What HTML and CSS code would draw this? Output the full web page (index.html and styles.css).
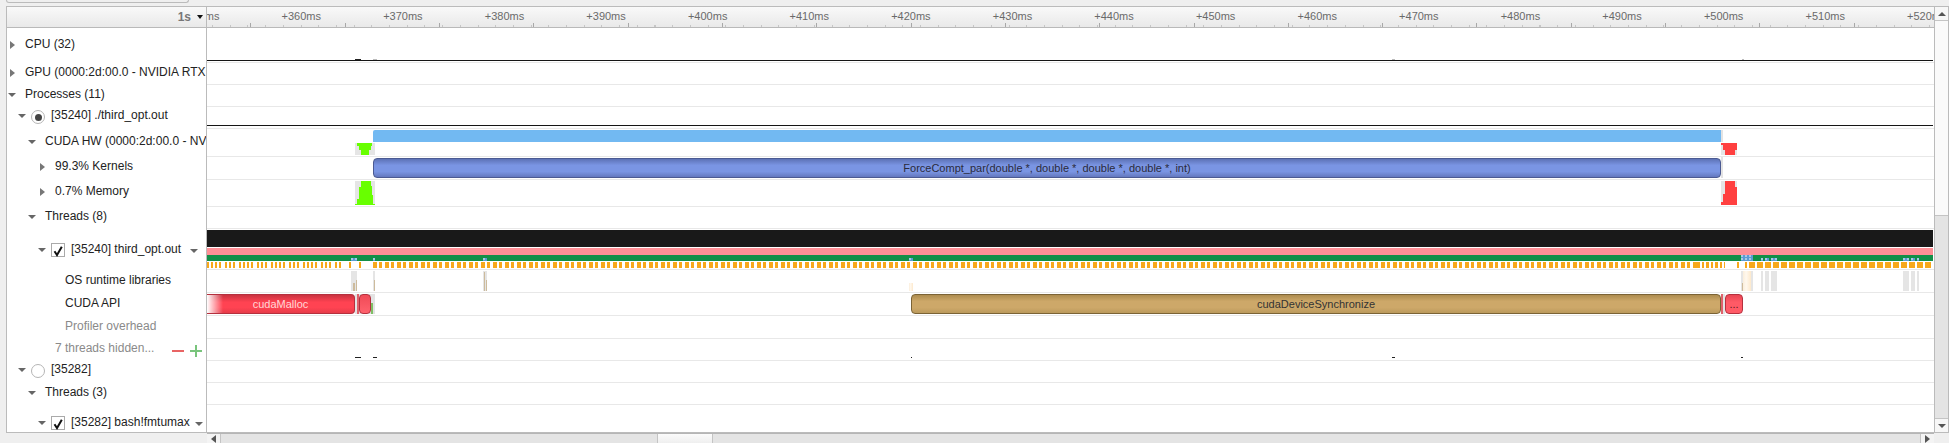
FILE: index.html
```html
<!DOCTYPE html>
<html lang="en">
<head>
<meta charset="utf-8">
<title>Timeline</title>
<link rel="stylesheet" href="styles.css">
</head>
<body>
<div class="topbar"><div class="toolbox"></div></div>
<div class="workspace">
  <div class="column">
    <div class="view">
      <div class="header">
        <div class="zoom"><span class="zoom-value">1s</span><span class="caret"></span></div>
        <div class="ruler">
          <div class="ruler-labels">
            <span>+350ms</span><span>+360ms</span><span>+370ms</span><span>+380ms</span><span>+390ms</span><span>+400ms</span><span>+410ms</span><span>+420ms</span><span>+430ms</span><span>+440ms</span><span>+450ms</span><span>+460ms</span><span>+470ms</span><span>+480ms</span><span>+490ms</span><span>+500ms</span><span>+510ms</span><span>+520ms</span>
          </div>
          <div class="ruler-ticks"></div>
        </div>
      </div>

      <div class="row h35">
        <div class="label l0"><span class="tri-right"></span><span class="text">CPU (32)</span></div>
        <div class="track">
          <i class="line cpu-line"></i>
          <i class="dash cpu-dash" style="left:148px;width:6px"></i>
          <i class="dash cpu-dash soft" style="left:166px;width:4px"></i>
          <i class="dash cpu-dash soft" style="left:1185px;width:3px"></i>
          <i class="dash cpu-dash soft" style="left:1535px;width:2px"></i>
        </div>
      </div>

      <div class="row h22">
        <div class="label l0"><span class="tri-right"></span><span class="text">GPU (0000:2d:00.0 - NVIDIA RTX A4000)</span></div>
        <div class="track"></div>
      </div>

      <div class="row h22">
        <div class="label l0"><span class="tri-down"></span><span class="text">Processes (11)</span></div>
        <div class="track"></div>
      </div>

      <div class="row h22">
        <div class="label l1"><span class="tri-down"></span><span class="radio on"></span><span class="text">[35240] ./third_opt.out</span></div>
        <div class="track"><i class="line proc-line"></i></div>
      </div>

      <div class="row h28">
        <div class="label l2"><span class="tri-down"></span><span class="text">CUDA HW (0000:2d:00.0 - NVIDIA RTX A4000)</span></div>
        <div class="track">
          <i class="mark sky" style="left:166px;width:1350px"></i>
          <i class="mark sky-end" style="left:1514px;width:2px"></i>
          <svg class="chart hw-chart" style="left:148px" width="20" height="12"><rect class="ch-bg" width="20" height="12"/><path class="ch-green" d="M2 0H17V3H16V7H14V12H6V7H4V3H2Z"/></svg>
          <svg class="chart hw-chart" style="left:1514px" width="16" height="12"><rect class="ch-bg" width="16" height="12"/><path class="ch-red" d="M0 0H16V7H14V12H4V7H2V2H0Z"/></svg>
        </div>
      </div>

      <div class="row h23">
        <div class="label l3 up"><span class="tri-right"></span><span class="text">99.3% Kernels</span></div>
        <div class="track">
          <i class="mark kernel-gap" style="left:1514px;width:2px"></i>
          <div class="bar kernel" style="left:166px;width:1348px">ForceCompt_par(double *, double *, double *, double *, int)</div>
        </div>
      </div>

      <div class="row h27">
        <div class="label l3 up"><span class="tri-right"></span><span class="text">0.7% Memory</span></div>
        <div class="track">
          <svg class="chart mem-chart" style="left:148px" width="20" height="24"><rect class="ch-bg" width="20" height="24"/><path class="ch-green" d="M6 0H16V5H17V14H18V23H20V24H0V23H2V18H4V6H6Z"/></svg>
          <svg class="chart mem-chart" style="left:1514px" width="16" height="24"><rect class="ch-bg" width="16" height="24"/><path class="ch-red" d="M4 0H14V6H16V24H0V21H2V13H4Z"/></svg>
        </div>
      </div>

      <div class="row h22">
        <div class="label l2"><span class="tri-down"></span><span class="text">Threads (8)</span></div>
        <div class="track"></div>
      </div>

      <div class="row h41">
        <div class="label l3 thread"><span class="tri-down"></span><span class="check"><svg width="12" height="12" viewBox="0 0 12 12"><path d="M2.5 6.2 5 10 9.8 1.8" fill="none" stroke="#111" stroke-width="2"/></svg></span><span class="text">[35240] third_opt.out</span><span class="tri-down end"></span></div>
        <div class="track">
          <i class="lane-black"></i>
          <i class="lane-pink"></i>
          <i class="lane-green"></i>
          <i class="bit" style="left:144px;width:6px"></i>
          <i class="bit" style="left:166px;width:2px"></i>
          <i class="bit" style="left:276px;width:4px"></i>
          <i class="bit" style="left:702px;width:4px"></i>
          <i class="bit tall" style="left:1534px;width:12px"></i>
          <i class="bit" style="left:1554px;width:2px"></i>
          <i class="bit" style="left:1558px;width:4px"></i>
          <i class="bit" style="left:1564px;width:6px"></i>
          <i class="bit" style="left:1696px;width:6px"></i>
          <i class="bit" style="left:1704px;width:4px"></i>
          <i class="bit" style="left:1710px;width:2px"></i>
          <i class="ticks ticks-sparse" style="left:0;width:135px"></i>
          <i class="ticks ticks-solid" style="left:142px;width:2px"></i>
          <i class="ticks ticks-solid" style="left:152px;width:2px"></i>
          <i class="ticks ticks-dense" style="left:166px;width:1324px"></i>
          <i class="ticks ticks-mixed" style="left:1490px;width:28px"></i>
          <i class="ticks ticks-solid" style="left:1530px;width:2px"></i>
          <i class="ticks ticks-solid" style="left:1538px;width:2px"></i>
          <i class="ticks ticks-wide" style="left:1542px;width:184px"></i>
        </div>
      </div>

      <div class="row h23">
        <div class="label plain os"><span class="text">OS runtime libraries</span></div>
        <div class="track">
          <i class="os-mark" style="left:144px;width:6px"></i>
          <i class="os-mark" style="left:166px;width:2px"></i>
          <i class="os-mark" style="left:276px;width:4px"></i>
          <i class="os-mark" style="left:1534px;width:12px"></i>
          <i class="os-mark" style="left:1554px;width:2px"></i>
          <i class="os-mark" style="left:1558px;width:4px"></i>
          <i class="os-mark" style="left:1564px;width:6px"></i>
          <i class="os-mark" style="left:1696px;width:6px"></i>
          <i class="os-mark" style="left:1704px;width:4px"></i>
          <i class="os-mark" style="left:1710px;width:2px"></i>
          <i class="cream" style="left:702px;width:4px;top:13px;height:8px"></i>
          <i class="cream" style="left:1536px;width:8px"></i>
          <i class="tan short" style="left:146px"></i>
          <i class="tan short" style="left:147px"></i>
          <i class="tan mid" style="left:149px"></i>
          <i class="tan mid" style="left:167px"></i>
          <i class="tan tall" style="left:277px"></i>
          <i class="tan mid" style="left:279px"></i>
          <i class="tan short" style="left:1535px"></i>
        </div>
      </div>

      <div class="row h23">
        <div class="label plain os"><span class="text">CUDA API</span></div>
        <div class="track">
          <i class="api-gap" style="left:148px;width:20px"></i>
          <i class="api-green" style="left:164px;width:2px"></i>
          <div class="bar malloc" style="left:0;width:148px">cudaMalloc</div>
          <i class="api-stripe" style="left:150px;width:2px"></i>
          <i class="bar small-red" style="left:152px;width:12px"></i>
          <div class="bar sync" style="left:704px;width:810px">cudaDeviceSynchronize</div>
          <i class="api-gap" style="left:1514px;width:4px"></i>
          <i class="api-stripe" style="left:1514px;width:2px"></i>
          <div class="bar more" style="left:1518px;width:18px">...</div>
        </div>
      </div>

      <div class="row h23">
        <div class="label plain os dim"><span class="text">Profiler overhead</span></div>
        <div class="track"></div>
      </div>

      <div class="row h22">
        <div class="label plain hidden-count dim"><span class="text">7 threads hidden...</span>
          <span class="adjust">
            <svg width="12" height="12" viewBox="0 0 12 12"><path d="M0 6H12" stroke="#e86464" stroke-width="2"/></svg>
            <svg width="12" height="12" viewBox="0 0 12 12"><path d="M0 6H12M6 0V12" stroke="#79c47c" stroke-width="2"/></svg>
          </span>
        </div>
        <div class="track">
          <i class="dash low" style="left:148px;width:6px"></i>
          <i class="dash low" style="left:166px;width:4px"></i>
          <i class="dash low" style="left:704px;width:1px"></i>
          <i class="dash low" style="left:1185px;width:3px"></i>
          <i class="dash low" style="left:1534px;width:2px"></i>
        </div>
      </div>

      <div class="row h22">
        <div class="label l1"><span class="tri-down"></span><span class="radio"></span><span class="text">[35282]</span></div>
        <div class="track"></div>
      </div>

      <div class="row h22">
        <div class="label l2"><span class="tri-down"></span><span class="text">Threads (3)</span></div>
        <div class="track"></div>
      </div>

      <div class="row h27 last">
        <div class="label l3 thread down"><span class="tri-down"></span><span class="check"><svg width="12" height="12" viewBox="0 0 12 12"><path d="M2.5 6.2 5 10 9.8 1.8" fill="none" stroke="#111" stroke-width="2"/></svg></span><span class="text">[35282] bash!fmtumax</span><span class="tri-down end"></span></div>
        <div class="track"></div>
      </div>
    </div>

    <div class="hscroll">
      <span class="hbtn"><span class="arrow-left"></span></span>
      <span class="htrack"><span class="hthumb"></span></span>
      <span class="hbtn right"><span class="arrow-right"></span></span>
    </div>
  </div>

  <div class="vscroll">
    <span class="vbtn"><span class="arrow-up"></span></span>
    <span class="vthumb"></span>
    <span class="vtrack"></span>
    <span class="vbtn"><span class="arrow-down"></span></span>
  </div>
</div>
</body>
</html>
```

FILE: styles.css
```css
* { box-sizing: border-box; }
html, body { margin: 0; height: 100%; }
body {
  display: flex;
  flex-direction: column;
  height: 443px;
  overflow: hidden;
  background: #efefef;
  font: 12px "Liberation Sans", Arial, sans-serif;
  color: #222;
}

/* top strip */
.topbar { height: 6px; padding-left: 6px; flex: none; }
.toolbox {
  width: 183px;
  height: 3px;
  border: 1px solid #bbb;
  border-top: 0;
  border-radius: 0 0 4px 4px;
}

.workspace { display: flex; flex: 1; min-height: 0; padding-left: 6px; }
.column { flex: 1; min-width: 0; display: flex; flex-direction: column; }

.view {
  height: 427px;
  flex: none;
  overflow: hidden;
  background: #fff;
  border: 1px solid #bbb;
  border-right: 0;
}

/* header */
.header {
  display: grid;
  grid-template-columns: 200px 1fr;
  height: 21px;
  background: linear-gradient(#f9f9f9, #e9e9e9);
  border-bottom: 1px solid #b9b9b9;
}
.zoom {
  display: flex;
  align-items: center;
  justify-content: flex-end;
  gap: 6px;
  padding: 0 3px 0 0;
  border-right: 1px solid #bbb;
}
.zoom-value { color: #777; font-weight: bold; font-size: 12px; }
.caret {
  width: 0; height: 0;
  border: 3px solid transparent;
  border-top: 4px solid #111;
  border-bottom: 0;
}
.ruler { overflow: hidden; display: flex; flex-direction: column; justify-content: space-between; }
.ruler-labels { display: flex; margin-left: -58.1px; padding-top: 3px; }
.ruler-labels span {
  flex: none;
  width: 101.6px;
  text-align: center;
  font-size: 11px;
  line-height: 13px;
  color: #6a6a6a;
}
.ruler-ticks {
  height: 4px;
  background:
    repeating-linear-gradient(90deg, transparent 0 43.5px, #a8a8a8 43.5px 44.5px, transparent 44.5px 94.3px),
    repeating-linear-gradient(90deg, transparent 0 5px, #c6c6c6 5px 6px, transparent 6px 17.7px) 0 2px no-repeat;
}

/* rows */
.row { display: grid; grid-template-columns: 200px 1fr; }
.h22 { height: 22px; }
.h23 { height: 23px; }
.h27 { height: 27px; }
.h28 { height: 28px; }
.h35 { height: 35px; }
.h41 { height: 41px; }

.label {
  display: flex;
  align-items: center;
  min-width: 0;
  overflow: hidden;
  white-space: nowrap;
  border-right: 1px solid #bbb;
  padding-bottom: 4px;
}
.l0 { padding-left: 1px; }
.l1 { padding-left: 11px; padding-bottom: 6px; }
.l2 { padding-left: 21px; }
.l3 { padding-left: 31px; }
.os { padding-left: 58px; }
.hidden-count { padding-left: 48px; }
.up { padding-bottom: 6px; }
.thread { padding-bottom: 2px; }
.down { padding-top: 7px; padding-bottom: 0; }
.dim .text { color: #8a8a8a; }

.l0 .text, .l2 .text, .l3 .text { margin-left: 9px; }
.l1 .text { margin-left: 6px; }
.thread .text { margin-left: 6px; }

.tri-right, .tri-down { flex: none; display: flex; width: 8px; justify-content: center; position: relative; }
.tri-right::before {
  content: "";
  border: 4px solid transparent;
  border-left: 5px solid #777;
  border-right: 0;
}
.tri-down::before {
  content: "";
  border: 4px solid transparent;
  border-top: 4px solid #666;
  border-bottom: 0;
}
.tri-down { top: 1px; }
.tri-right { top: 1px; }
.tri-down.end { margin-left: auto; margin-right: 8px; top: 2px; }
.down .tri-down.end { margin-right: 3px; }

.radio {
  flex: none;
  width: 14px; height: 14px;
  margin-left: 5px;
  border: 1px solid #b5b5b5;
  border-radius: 50%;
  background: #fff;
  position: relative;
  top: 2px;
}
.radio.on::before {
  content: "";
  position: absolute;
  left: 2.5px; top: 2.5px;
  width: 7px; height: 7px;
  border-radius: 50%;
  background: #444;
}
.check {
  flex: none;
  width: 14px; height: 14px;
  margin-left: 5px;
  border: 1px solid #aaa;
  background: #fff;
  position: relative;
  top: 1px;
}
.check svg { display: block; margin-top: 1px; }
.adjust { margin-left: auto; margin-right: 4px; display: flex; gap: 6px; align-items: center; position: relative; top: 3px; }
.adjust svg { display: block; }

/* tracks */
.track { position: relative; border-bottom: 1px solid #e8e8e8; overflow: hidden; }
.last .track { border-bottom: 0; }
.track > * { position: absolute; display: block; }

.line { left: 0; right: 1px; height: 1px; background: #151515; }
.cpu-line { top: 32px; }
.proc-line { top: 18px; }
.dash { height: 1px; background: #222; }
.cpu-dash { top: 31px; }
.cpu-dash.soft { background: #bbb; }
.low { top: 18px; }

.mark { top: 1px; height: 12px; }
.sky { background: #72b9f2; border-radius: 2px 0 0 0; }
.sky-end { background: #e3e3e3; }
.kernel-gap { top: 0; height: 21px; background: #e3e3e3; }
.chart { display: block; shape-rendering: crispEdges; }
.hw-chart { top: 14px; }
.mem-chart { top: 1px; }
.ch-bg { fill: #e5e5e5; }
.ch-green { fill: #68ff00; }
.ch-red { fill: #ff4040; }

.bar {
  display: flex;
  align-items: center;
  justify-content: center;
  top: 1px;
  height: 20px;
  border-radius: 4px;
  font-size: 11px;
  white-space: nowrap;
  overflow: hidden;
}
.kernel {
  border: 1px solid #4b5a92;
  background: linear-gradient(#5d72b6, #7a95e3 35%, #7a95e3 70%, #6478be);
  color: #2a2a3a;
  font-size: 11px;
}
.sync {
  border: 1px solid #7b6335;
  background: linear-gradient(#ad8c4e, #cda869 35%, #cda869 70%, #bb9a5c);
  color: #333;
}
.malloc {
  border: 1px solid #b5303e;
  border-left: 0;
  background:
    linear-gradient(90deg, #fff, rgba(255,255,255,0) 16px),
    linear-gradient(#c9323f, #ff4352 40%, #ff4352 70%, #e63c4a);
  color: #ffd6d6;
  border-radius: 0 4px 4px 0;
}
.small-red {
  border: 1px solid #b5303e;
  background: linear-gradient(#f04a57, #ff626d);
  border-radius: 4px;
}
.more {
  border: 1px solid #b5303e;
  background: linear-gradient(#e84552, #ff5a66 40%, #ff5a66);
  color: #5a1a20;
  font-size: 11px;
  line-height: 8px;
}
.api-gap { top: 1px; height: 20px; background: #e3e3e3; }
.api-green { top: 10px; height: 11px; background: #7fbf66; }
.api-stripe { top: 1px; height: 20px; background: #e0626c; }

/* third_opt lanes */
.lane-black { left: 0; right: 1px; top: 1px; height: 17px; background: #191919; }
.lane-pink { left: 0; right: 1px; top: 19px; height: 7px; background: #ff8f96; }
.lane-green { left: 0; right: 1px; top: 26px; height: 6px; background: #138f48; }
.bit {
  top: 29px;
  height: 3px;
  background: radial-gradient(circle at 1px 1px, #fff 0 .6px, transparent .8px) 0 0 / 4px 3px, #5c9ad2;
}
.bit.tall { top: 26px; height: 6px; }
.ticks { top: 33px; height: 6px; }
.ticks-solid { background: #f7a81b; }
.ticks-sparse {
  background: repeating-linear-gradient(90deg,
    #f7a81b 0 2px, transparent 2px 4px, #f7a81b 4px 6px, transparent 6px 8px,
    #f7a81b 8px 10px, transparent 10px 12px, #f7a81b 12px 14px, transparent 14px 18px,
    #f7a81b 18px 20px, transparent 20px 22px, #f7a81b 22px 24px, transparent 24px 26px,
    #f7a81b 26px 28px, transparent 28px 32px);
}
.ticks-dense {
  background: repeating-linear-gradient(90deg, #f7a81b 0 4px, transparent 4px 6px, #f7a81b 6px 9px, transparent 9px 12px);
}
.ticks-mixed {
  background: repeating-linear-gradient(90deg, #f7a81b 0 3px, transparent 3px 5px, #f7a81b 5px 7px, transparent 7px 9px);
}
.ticks-wide {
  background: repeating-linear-gradient(90deg, #f7a81b 0 6px, transparent 6px 8px);
}

.os-mark { top: 1px; height: 20px; background: #e5e5e5; }
.cream { top: 1px; height: 20px; background: linear-gradient(90deg, #fbeedb, #fff8ee 40%, #fde9cc); }
.tan { width: 1px; background: #cdbb9c; bottom: 1px; }
.tan.short { height: 8px; }
.tan.mid { height: 11px; }
.tan.tall { height: 19px; }

/* scrollbars */
.hscroll {
  display: flex;
  flex: 1;
  margin-left: 201px;
  background: #e4e4e4;
  border-top: 1px solid #b5b5b5;
}
.hbtn {
  flex: none;
  width: 14px;
  display: flex;
  align-items: center;
  justify-content: center;
  background: #f4f4f4;
  border-right: 1px solid #c4c4c4;
}
.hbtn.right { border-right: 0; border-left: 1px solid #c4c4c4; }
.htrack { flex: 1; padding-left: 436px; }
.hthumb {
  display: block;
  width: 56px;
  height: 100%;
  background: linear-gradient(#fbfbfb, #efefef);
  border: 1px solid #c4c4c4;
  border-width: 0 1px;
}
.arrow-left, .arrow-right { width: 0; height: 0; border: 4px solid transparent; }
.arrow-left { border-right: 5px solid #555; border-left: 0; }
.arrow-right { border-left: 5px solid #555; border-right: 0; }

.vscroll {
  flex: none;
  width: 15px;
  margin-bottom: 10px;
  display: flex;
  flex-direction: column;
  border: 1px solid #bbb;
  background: #e4e4e4;
}
.vbtn {
  flex: none;
  height: 14px;
  display: flex;
  align-items: center;
  justify-content: center;
  background: #f7f7f7;
}
.vbtn:first-child { border-bottom: 1px solid #c4c4c4; }
.vbtn:last-child { border-top: 1px solid #c4c4c4; }
.vthumb { flex: none; height: 195px; background: #fafafa; border-bottom: 1px solid #c4c4c4; }
.vtrack { flex: 1; }
.arrow-up, .arrow-down { width: 0; height: 0; border: 4px solid transparent; }
.arrow-up { border-bottom: 4px solid #555; border-top: 0; }
.arrow-down { border-top: 4px solid #555; border-bottom: 0; }
```
